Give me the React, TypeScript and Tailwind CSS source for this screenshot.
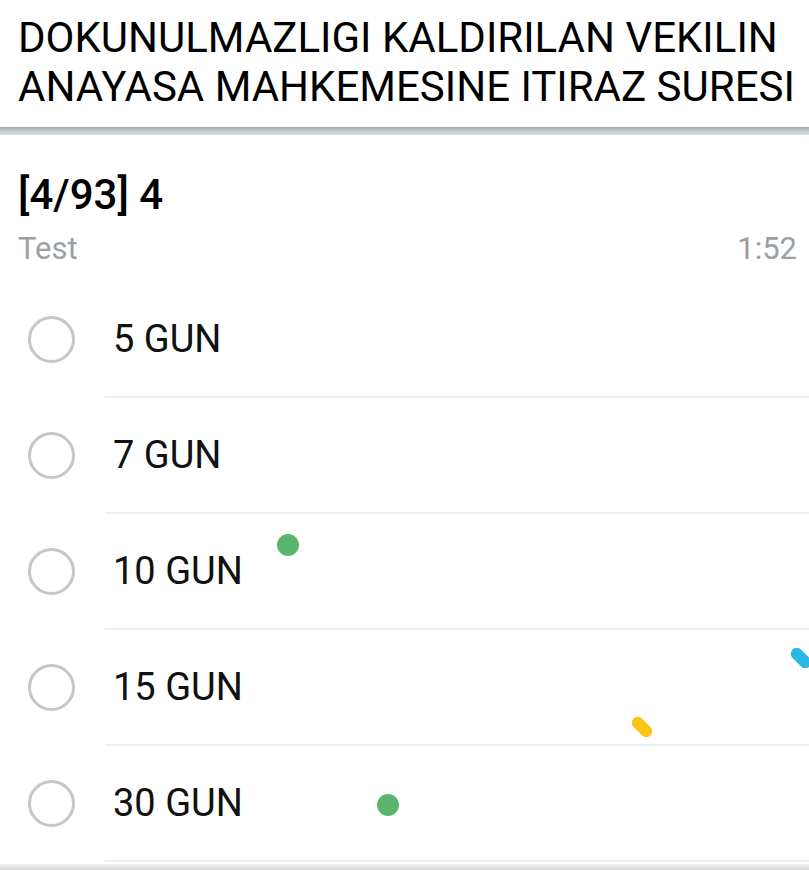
import React from "react";

const options = ["5 GUN", "7 GUN", "10 GUN", "15 GUN", "30 GUN"];

export default function App() {
  return (
    <div className="relative w-[809px] h-[870px] overflow-hidden bg-white" style={{ fontFamily: "Roboto, 'Noto Sans', sans-serif" }}>
      <header className="h-[127px] bg-white rounded-bl-[10px] pl-[18px] pt-[13px] text-black">
        <div className="text-[42px] leading-[49px] whitespace-nowrap">DOKUNULMAZLIGI KALDIRILAN VEKILIN</div>
        <div className="text-[42px] leading-[49px] whitespace-nowrap">ANAYASA MAHKEMESINE ITIRAZ SURESI</div>
      </header>
      <div className="h-[8px] bg-gradient-to-b from-[#9ea4a8] via-[#c9cdd0] to-[#d9dcde]" />
      <main className="bg-white">
        <div className="pt-[35px] pl-[18px] pr-[12px]">
          <div className="text-[42px] leading-[49px] font-medium text-black whitespace-nowrap">[4/93] 4</div>
          <div className="mt-[12px] flex justify-between text-[31px] leading-[36px] text-[#9aa0a6]">
            <span>Test</span>
            <span>1:52</span>
          </div>
        </div>
        <div className="mt-[15px]">
          {options.map((o) => (
            <div key={o} className="flex h-[116px]">
              <div className="w-[105px] flex items-center pl-[28px] pb-[2px]">
                <div className="w-[47px] h-[47px] rounded-full border-[3px] border-[#c3c7cb]" />
              </div>
              <div className="flex-1 flex items-center pl-[8px] border-b-2 border-[#edf0f0] text-[38px] text-[#111] leading-none">
                {o}
              </div>
            </div>
          ))}
        </div>
      </main>
      <div className="absolute left-0 right-0 bottom-0 h-[6px] bg-gradient-to-b from-[#f4f4f4] to-[#d6d6d6]" />
      <div className="absolute left-[277px] top-[534px] w-[22px] h-[22px] rounded-full bg-[#5bb56e]" />
      <div className="absolute left-[377px] top-[794px] w-[22px] h-[22px] rounded-full bg-[#5bb56e]" />
      <div className="absolute left-[789px] top-[652px] w-[24px] h-[12px] rounded-full bg-[#2db7e4] rotate-45" />
      <div className="absolute left-[630px] top-[721px] w-[24px] h-[12px] rounded-full bg-[#fcc414] rotate-45" />
    </div>
  );
}
